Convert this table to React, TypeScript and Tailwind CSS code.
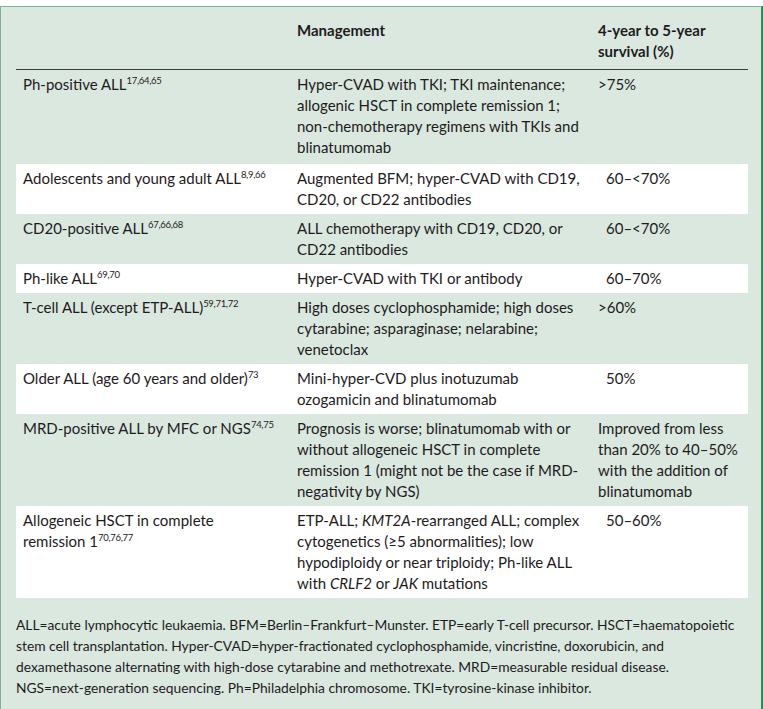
import React from "react";

type Row = {
  group: React.ReactNode;
  management: React.ReactNode;
  survival: React.ReactNode;
  indent?: boolean;
  white?: boolean;
};

const Ref: React.FC<{ children: React.ReactNode }> = ({ children }) => (
  <sup className="text-[9.5px] -top-[6px] tracking-[-0.3px]">{children}</sup>
);

const rows: Row[] = [
  {
    group: (
      <>
        Ph-positive ALL<Ref>17,64,65</Ref>
      </>
    ),
    management: (
      <>
        Hyper-CVAD with TKI; TKI maintenance;
        <br />
        allogenic HSCT in complete remission 1;
        <br />
        non-chemotherapy regimens with TKIs and
        <br />
        blinatumomab
      </>
    ),
    survival: ">75%",
  },
  {
    group: (
      <>
        Adolescents and young adult ALL<Ref>8,9,66</Ref>
      </>
    ),
    management: (
      <>
        Augmented BFM; hyper-CVAD with CD19,
        <br />
        CD20, or CD22 antibodies
      </>
    ),
    survival: "60–<70%",
    indent: true,
    white: true,
  },
  {
    group: (
      <>
        CD20-positive ALL<Ref>67,66,68</Ref>
      </>
    ),
    management: (
      <>
        ALL chemotherapy with CD19, CD20, or
        <br />
        CD22 antibodies
      </>
    ),
    survival: "60–<70%",
    indent: true,
  },
  {
    group: (
      <>
        Ph-like ALL<Ref>69,70</Ref>
      </>
    ),
    management: "Hyper-CVAD with TKI or antibody",
    survival: "60–70%",
    indent: true,
    white: true,
  },
  {
    group: (
      <>
        T-cell ALL (except ETP-ALL)<Ref>59,71,72</Ref>
      </>
    ),
    management: (
      <>
        High doses cyclophosphamide; high doses
        <br />
        cytarabine; asparaginase; nelarabine;
        <br />
        venetoclax
      </>
    ),
    survival: ">60%",
  },
  {
    group: (
      <>
        Older ALL (age 60 years and older)<Ref>73</Ref>
      </>
    ),
    management: (
      <>
        Mini-hyper-CVD plus inotuzumab
        <br />
        ozogamicin and blinatumomab
      </>
    ),
    survival: "50%",
    indent: true,
    white: true,
  },
  {
    group: (
      <>
        MRD-positive ALL by MFC or NGS<Ref>74,75</Ref>
      </>
    ),
    management: (
      <>
        Prognosis is worse; blinatumomab with or
        <br />
        without allogeneic HSCT in complete
        <br />
        remission 1 (might not be the case if MRD-
        <br />
        negativity by NGS)
      </>
    ),
    survival: (
      <>
        Improved from less
        <br />
        than 20% to 40–50%
        <br />
        with the addition of
        <br />
        blinatumomab
      </>
    ),
  },
  {
    group: (
      <>
        Allogeneic HSCT in complete
        <br />
        remission 1<Ref>70,76,77</Ref>
      </>
    ),
    management: (
      <>
        ETP-ALL; <i>KMT2A</i>-rearranged ALL; complex
        <br />
        cytogenetics (≥5 abnormalities); low
        <br />
        hypodiploidy or near triploidy; Ph-like ALL
        <br />
        with <i>CRLF2</i> or <i>JAK</i> mutations
      </>
    ),
    survival: "50–60%",
    indent: true,
    white: true,
  },
];

const footnote = [
  "ALL=acute lymphocytic leukaemia. BFM=Berlin–Frankfurt–Munster. ETP=early T-cell precursor. HSCT=haematopoietic",
  "stem cell transplantation. Hyper-CVAD=hyper-fractionated cyclophosphamide, vincristine, doxorubicin, and",
  "dexamethasone alternating with high-dose cytarabine and methotrexate. MRD=measurable residual disease.",
  "NGS=next-generation sequencing. Ph=Philadelphia chromosome. TKI=tyrosine-kinase inhibitor.",
];

const App: React.FC = () => {
  return (
    <div className="min-h-screen bg-white pt-[6px] font-[Lato,sans-serif] text-[#1e1b1c]">
      <div className="w-[763px] border-t border-l border-r-2 border-t-[#7fb398] border-l-[#7fb398] border-r-[#2e8a5a] bg-[#dae8e0] pl-[15px] pr-[13px] pb-[24px]">
        {/* header */}
        <div className="grid grid-cols-[274px_301px_157px] pt-[13px] pb-[7px] border-b border-[#3a3a3a] text-[15px] leading-[21px] font-bold">
          <div />
          <div className="pl-[7px]">Management</div>
          <div className="pl-[7px]">
            4-year to 5-year
            <br />
            survival (%)
          </div>
        </div>

        {rows.map((row, i) => (
          <div
            key={i}
            className={`grid grid-cols-[274px_301px_157px] text-[15px] leading-[21px] whitespace-nowrap ${
              row.white ? "bg-white" : ""
            } ${i === 0 ? "pt-[4px] pb-[6px]" : "py-[4px]"}`}
          >
            <div className="pl-[7px]">{row.group}</div>
            <div className="pl-[7px]">{row.management}</div>
            <div className={row.indent ? "pl-[15px]" : "pl-[7px]"}>{row.survival}</div>
          </div>
        ))}

        <div className="pt-[16px] text-[13.8px] leading-[21px] whitespace-nowrap">
          {footnote.map((line, i) => (
            <div key={i}>{line}</div>
          ))}
        </div>
      </div>
    </div>
  );
};

export default App;
